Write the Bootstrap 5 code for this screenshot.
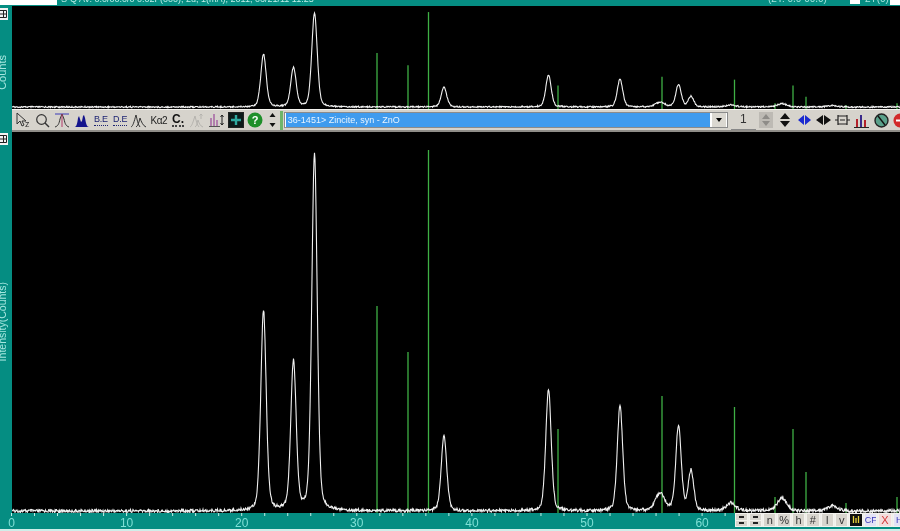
<!DOCTYPE html>
<html lang="en">
<head>
    <title>Jade pattern view</title>
    <meta charset="utf-8">
    <meta name="viewport" content="width=device-width, initial-scale=1">
    <link href="https://cdn.jsdelivr.net/npm/bootstrap@5.3.0/dist/css/bootstrap.min.css" rel="stylesheet">
    <style>
        html, body { height: 531px; overflow: hidden; }
        body { background: #058d82; font-family: "Liberation Sans", Arial, sans-serif; color: #a6e6df; filter: blur(.45px); }
        .title-strip { height: 6px; overflow: hidden; font-size: 9px; line-height: 10px; }
        .title-box { width: 57px; height: 5px; background: #fff; flex: none; }
        .title-text { margin: -6px 0 0 4px; width: 707px; flex: none; white-space: nowrap; color: #bdeee8; }
        .title-range { width: 82px; flex: none; margin-top: -6px; white-space: nowrap; font-size: 10px; }
        .title-white { width: 10px; height: 4px; flex: none; background: #fff; margin-right: 5px; }
        .title-mode { width: 25px; flex: none; margin-top: -6px; white-space: nowrap; font-size: 10px; }
        .title-end { width: 10px; height: 5px; flex: none; background: #fff; }
        .pane-top { height: 103px; }
        .pane-main { height: 381px; }
        .side-rail { width: 12px; flex: none; overflow: hidden; }
        .side-btn { width: 8px; height: 12px; background: #f2f2f2; display: block; }
        .btn-top { margin-top: 2px; }
        .btn-main { margin-top: 1px; }
        .side-label { writing-mode: vertical-rl; transform: rotate(180deg); font-size: 11px; line-height: 10px; width: 8px; margin-left: -3px; white-space: nowrap; }
        .label-counts { margin-top: 35px; }
        .label-intensity { margin-top: 137px; font-size: 10.5px; }
        .plot { background: #000; flex: 1 1 0; min-width: 0; display: block; }
        .tool-strip { height: 23px; margin-left: 12px; background: #d6d3cc; border-top: 1px solid #f4f3ef; border-bottom: 2px solid #8f8d88; padding-left: 2px; overflow: hidden; }
        .tool { width: 19.3px; height: 20px; flex: none; display: flex; align-items: center; justify-content: center; color: #222; }
        .tool-word { font-size: 9px; letter-spacing: -.2px; color: #1c2372; border-bottom: 1px dotted #1c2372; line-height: 9px; padding-bottom: 1px; }
        .tool-plain { font-size: 10px; color: #222; letter-spacing: -.5px; }
        .tool-c { font-size: 12px; font-weight: 700; color: #111; border-bottom: 2px dotted #444; line-height: 11px; }
        .tool-narrow { width: 15px; }
        .tool-gap { width: 3px; height: 19px; background: #6fb56a; flex: none; margin-right: 1px; }
        .pattern-box { width: 444px; height: 16px; flex: none; background: #fff; border: 1px solid #8b8b8b; padding: 0 1px; display: flex; }
        .pattern-name { flex: 1 1 0; background: #3f9bee; color: #e8f4ff; font-size: 9px; line-height: 14px; padding-left: 2px; white-space: nowrap; overflow: hidden; }
        .pattern-arrow { width: 14px; margin-left: 2px; background: #dbd8d1; position: relative; }
        .pattern-arrow::after { content: ""; position: absolute; left: 4px; top: 5px; border: 3px solid transparent; border-top: 4px solid #000; }
        .pattern-num { width: 25px; flex: none; margin-left: 3px; text-align: center; font-size: 12px; color: #333; border-bottom: 1px solid #888; line-height: 19px; }
        .tool-right { width: 19.3px; }
        .axis-row { height: 18px; border-bottom: 2px solid #cfeee9; }
        .axis-box { width: 735px; height: 16px; display: block; }
        .axis-holder { width: 735px; flex: none; }
        .key-row { flex: 1 1 0; height: 14px; background: #efeee9; gap: 1px; overflow: hidden; }
        .key { height: 14px; width: 13.4px; flex: none; background: #d8d5ce; border: 1px solid #f3f2ee; font-size: 11px; line-height: 12px; text-align: center; color: #333; overflow: hidden; }
        .key-pair { display: flex; flex-direction: column; align-items: center; justify-content: space-evenly; width: 13px; }
        .key-pair i { display: block; width: 5px; height: 2px; background: #222; }
        .key-pair hr { width: 100%; margin: 0; border-top: 1px solid #f3f2ee; opacity: 1; }
        .key-blue { color: #3a3ab8; font-size: 9px; background: #e4e2f5; }
        .key-red { color: #d43a3a; background: #f3dcdc; }
        .key-blackbox { background: #111; color: #e8d43a; font-weight: 700; font-size: 9px; }
    </style>
</head>
<body>
<div class="title-strip d-flex">
    <div class="title-box"></div>
    <div class="title-text">S-Q AV. 0.0/00.0/0 0.02F(000), 2u, 1(mA), 2011, 06/21/11 11:25</div>
    <div class="title-range">(2T: 0.0 00.0)</div>
    <div class="title-white"></div>
    <div class="title-mode">2T(0)</div>
    <div class="title-end"></div>
</div>

<div class="pane-top d-flex">
    <div class="side-rail">
        <svg class="side-btn btn-top" viewBox="0 0 8 12"><path d="M0 2.500h6.500v7H0M0 6h6.500M3.500 2.500v7" stroke="#222" fill="none"/></svg>
        <div class="side-label label-counts">Counts</div>
    </div>
    <svg class="plot" id="plotTop" viewBox="12 6 888 103"></svg>
</div>

<div class="tool-strip d-flex align-items-center">
    <div class="tool"><svg width="17" height="16" viewBox="0 0 17 16"><path d="M2 1v11l3-3 2 5 2-1-2-4h4z" fill="none" stroke="#333"/><text x="10" y="15" font-size="9" fill="#333" font-family="Liberation Sans">z</text></svg></div>
    <div class="tool"><svg width="15" height="15" viewBox="0 0 15 15"><circle cx="6.500" cy="6.500" r="4.800" fill="none" stroke="#333" stroke-width="1.200"/><path d="M10 10l4 4" stroke="#333" stroke-width="1.400"/></svg></div>
    <div class="tool"><svg width="16" height="16" viewBox="0 0 16 16"><path d="M1 2h14" stroke="#3a3ab8"/><path d="M1 15c3-1 4-3 5-8l2-5 2 5c1 5 2 7 5 8" fill="none" stroke="#333"/><path d="M8 2v13" stroke="#b33a6a"/></svg></div>
    <div class="tool"><svg width="16" height="16" viewBox="0 0 16 16"><path d="M0 15c2 0 3-1 4-9l1-2 1 3 1 3 1-1 1-5 1-1 1 3c1 6 2 9 4 9z" fill="#14148c"/></svg></div>
    <div class="tool"><span class="tool-word">B.E</span></div>
    <div class="tool"><span class="tool-word">D.E</span></div>
    <div class="tool"><svg width="16" height="16" viewBox="0 0 16 16"><path d="M0 15c2-1 3-5 5-12 1 4 2 10 4 12M5 15c2-1 3-5 4-9 1 3 3 8 6 9" fill="none" stroke="#333"/></svg></div>
    <div class="tool"><span class="tool-plain">Kα2</span></div>
    <div class="tool"><span class="tool-c">C.</span></div>
    <div class="tool"><svg width="16" height="16" viewBox="0 0 16 16"><path d="M1 15c2-1 3-5 5-11 1 4 2 9 4 11M6 15c2-1 2-4 3-7 1 3 2 6 5 7" fill="none" stroke="#b5b3ae"/><path d="M12 2v5M10.500 3.500L12 2l1.500 1.500" fill="none" stroke="#b5b3ae"/></svg></div>
    <div class="tool"><svg width="17" height="16" viewBox="0 0 17 16"><path d="M3 14V6M6 14V2M9 14V8" stroke="#9a4a9a" stroke-width="1.200"/><path d="M1 14.500h11" stroke="#555"/><path d="M14 3v10M12.500 5L14 3l1.500 2M12.500 11l1.500 2 1.500-2" fill="none" stroke="#222"/></svg></div>
    <div class="tool"><svg width="16" height="16" viewBox="0 0 16 16"><rect x="0.500" y="0.500" width="15" height="15" fill="#0d1a1a" stroke="#222"/><path d="M8 3v10M3 8h10" stroke="#2fa9a0" stroke-width="2.400"/></svg></div>
    <div class="tool"><svg width="16" height="16" viewBox="0 0 16 16"><circle cx="8" cy="8" r="7.500" fill="#1f8f2a"/><text x="8" y="12" text-anchor="middle" font-size="11" font-weight="700" fill="#fff" font-family="Liberation Sans">?</text></svg></div>
    <div class="tool tool-narrow"><svg width="9" height="16" viewBox="0 0 9 16"><path d="M4.500 1l3 4h-6zM4.500 15l3-4h-6z" fill="#111"/></svg></div>
    <div class="tool-gap"></div>
    <div class="pattern-box">
        <div class="pattern-name">36-1451&gt; Zincite, syn - ZnO</div>
        <div class="pattern-arrow"></div>
    </div>
    <div class="pattern-num">1</div>
    <div class="tool tool-right"><svg width="14" height="16" viewBox="0 0 14 16"><rect width="14" height="16" fill="#bdbab4"/><path d="M7 2l4 5H3zM7 14l4-5H3z" fill="#8e8c88"/></svg></div>
    <div class="tool tool-right"><svg width="12" height="16" viewBox="0 0 12 16"><path d="M6 1l5 6H1zM6 15l5-6H1z" fill="#111"/></svg></div>
    <div class="tool tool-right"><svg width="13" height="12" viewBox="0 0 13 12"><path d="M0 6l6-5v10zM13 6L7 1v10z" fill="#1a2ad0"/></svg></div>
    <div class="tool tool-right"><svg width="15" height="12" viewBox="0 0 15 12"><path d="M0 6l7-5v10zM15 6L8 1v10z" fill="#111"/></svg></div>
    <div class="tool tool-right"><svg width="15" height="14" viewBox="0 0 15 14"><path d="M0 7h3M12 7h3M3 2v10M12 2v10M3 3h9v8H3z" fill="none" stroke="#222" stroke-width="1.200"/><path d="M5 7h5" stroke="#222"/></svg></div>
    <div class="tool tool-right"><svg width="15" height="15" viewBox="0 0 15 15"><path d="M3 14V6" stroke="#b3202a" stroke-width="2"/><path d="M7 14V2" stroke="#3a2a8a" stroke-width="2"/><path d="M11 14V7" stroke="#b3202a" stroke-width="2"/><path d="M0 14.500h15" stroke="#222"/></svg></div>
    <div class="tool tool-right"><svg width="15" height="15" viewBox="0 0 15 15"><circle cx="7.500" cy="7.500" r="6.500" fill="#5aa08a" stroke="#222" stroke-width="1.400"/><path d="M4 3l7 9" stroke="#111" stroke-width="1.400"/></svg></div>
    <div class="tool tool-right"><svg width="15" height="15" viewBox="0 0 15 15"><circle cx="7.500" cy="7.500" r="7" fill="#d22a2a"/><path d="M3 7.500h9" stroke="#fff" stroke-width="2"/></svg></div>
</div>

<div class="pane-main d-flex">
    <div class="side-rail">
        <svg class="side-btn btn-main" viewBox="0 0 8 12"><path d="M0 2.500h6.500v7H0M0 6h6.500M3.500 2.500v7" stroke="#222" fill="none"/></svg>
        <div class="side-label label-intensity">Intensity(Counts)</div>
    </div>
    <svg class="plot" id="plotMain" viewBox="12 132 888 381"></svg>
</div>

<div class="axis-row d-flex">
    <div class="axis-holder">
        <svg class="axis-box" id="axisSvg" viewBox="0 513 735 16"></svg>
    </div>
    <div class="key-row d-flex">
        <div class="key key-pair"><i></i><hr><i></i></div>
        <div class="key key-pair"><i></i><hr><i></i></div>
        <div class="key">n</div>
        <div class="key">%</div>
        <div class="key">h</div>
        <div class="key">#</div>
        <div class="key">l</div>
        <div class="key">v</div>
        <div class="key key-blackbox">lıl</div>
        <div class="key key-blue">CF</div>
        <div class="key key-red">X</div>
        <div class="key key-blue">H</div>
    </div>
</div>

<script src="https://cdn.jsdelivr.net/npm/bootstrap@5.3.0/dist/js/bootstrap.bundle.min.js"></script>
<script>
    // [x, height above baseline in the main pane]
    const peaks = [[263.5, 200], [293.5, 149], [314.5, 358], [444, 75], [548.5, 122], [620, 105], [660, 17],
        [678.5, 85], [691, 40], [731, 8], [782, 13], [833, 5]];
    // [x, top y in the main pane]
    const sticks = [[377, 306], [408, 352], [428.5, 150], [558, 429], [662, 396], [734.5, 407], [775, 497],
        [793, 429], [806, 472], [846, 503], [897, 497]];
    const BASE = 511, SCALE = 0.263;

    function noise(i) {
        const s = Math.sin(i * 12.9898) * 43758.5453;
        return (s - Math.floor(s)) - 0.5;
    }

    function intensity(x) {
        let y = 0;
        peaks.forEach(p => {
            const w = p[1] < 30 ? 5.5 : 3.2;
            const d = (x - p[0]) / w;
            y += p[1] * (0.72 * Math.exp(-0.693 * d * d) + 0.28 / (1 + d * d));
        });
        return y;
    }

    function drawPlot(svg, base, scale, amp) {
        let d = "";
        for (let x = 12; x <= 900; x += 0.5) {
            const y = base - intensity(x) * scale + noise(x * 2) * amp;
            d += (d ? "L" : "M") + x + " " + y.toFixed(1);
        }
        let html = "";
        sticks.forEach(s => {
            const top = base - (BASE - s[1]) * scale;
            html += `<path d="M${s[0]} ${top}V${base + 2}" stroke="#3fb045" stroke-width="1.300"/>`;
        });
        html += `<path d="${d}" fill="none" stroke="#f0f0f0" stroke-width="1.100"/>`;
        svg.innerHTML = html;
    }

    drawPlot(document.getElementById("plotMain"), BASE, 1, 3);
    drawPlot(document.getElementById("plotTop"), 107, SCALE, 1.4);

    let axis = "";
    for (let t = 0; t <= 62; t += 2) {
        const x = 11.5 + t * 11.51;
        axis += `<path d="M${x} 513v3" stroke="#c5efe9"/>`;
        if (t % 10 === 0) {
            axis += `<text x="${x}" y="527" text-anchor="middle" font-size="12" fill="#7fe0d6" font-family="Liberation Sans">${t}</text>`;
        }
    }
    document.getElementById("axisSvg").innerHTML = axis;
</script>
</body>
</html>
